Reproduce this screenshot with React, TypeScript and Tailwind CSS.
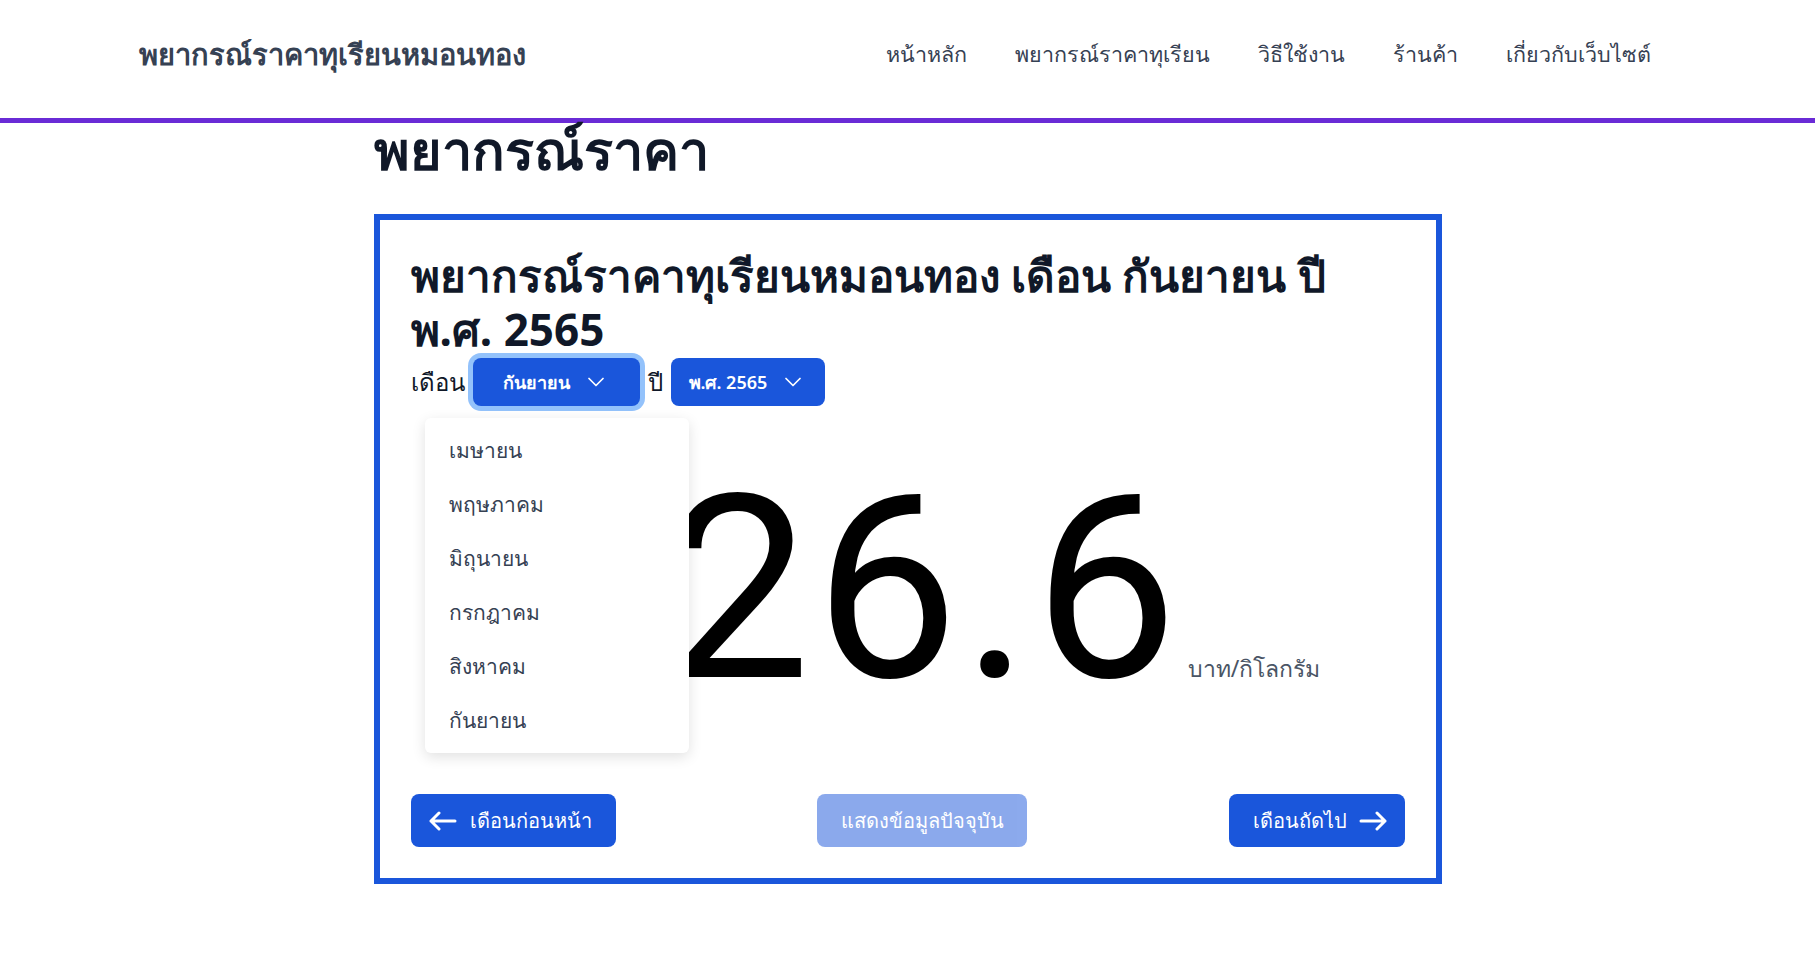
import { ChevronDown } from 'lucide-react'

const navLinks = ['หน้าหลัก', 'พยากรณ์ราคาทุเรียน', 'วิธีใช้งาน', 'ร้านค้า', 'เกี่ยวกับเว็บไซต์']
const months = ['เมษายน', 'พฤษภาคม', 'มิถุนายน', 'กรกฎาคม', 'สิงหาคม', 'กันยายน']

function LongArrow({ flip = false }: { flip?: boolean }) {
  return (
    <svg
      width="28"
      height="20"
      viewBox="0 0 28 20"
      fill="none"
      stroke="currentColor"
      strokeWidth="3"
      strokeLinecap="round"
      strokeLinejoin="round"
      className={flip ? 'rotate-180' : ''}
    >
      <path d="M26 10H2M10 2 2 10l8 8" />
    </svg>
  )
}

export default function App() {
  return (
    <main className="min-h-screen bg-white [font-family:'Noto_Sans',sans-serif] text-gray-900">
      {/* Navigation */}
      <nav className="h-[123px] border-b-[5px] border-[#6a2bd6] bg-white">
        <div className="flex h-full items-center justify-between pb-[10px] pl-[139px] pr-[140px]">
          <span className="text-[29px] font-semibold text-gray-700">พยากรณ์ราคาทุเรียนหมอนทอง</span>
          <div className="flex items-center">
            {navLinks.map((link) => (
              <span key={link} className="px-6 text-[21.5px] text-gray-700">
                {link}
              </span>
            ))}
          </div>
        </div>
      </nav>

      <section className="mx-auto w-[1068px]">
        <h1 className="mt-[-4px] text-[54px] font-bold leading-[60px] text-gray-900">พยากรณ์ราคา</h1>

        {/* Forecast card */}
        <div className="mt-[35px] border-[6px] border-[#1a56db] px-[31px] pt-[28px] pb-[31px]">
          <h2 className="text-[44px] font-bold leading-[54px] text-gray-900">
            พยากรณ์ราคาทุเรียนหมอนทอง เดือน กันยายน ปี พ.ศ.&nbsp;2565
          </h2>

          <div className="mt-[2px] flex items-center gap-2 text-2xl text-gray-900">
            <span>เดือน</span>
            <div className="relative">
              <button className="flex h-12 w-[167px] items-center justify-center gap-3 rounded-lg bg-[#1a56db] text-lg font-semibold text-white ring-[5px] ring-[#93c2fb]">
                กันยายน
                <ChevronDown className="h-7 w-7" strokeWidth={1.5} />
              </button>
              <div className="absolute top-[60px] left-[-48px] z-10 w-[264px] rounded-md bg-white pt-[5px] pb-[6px] shadow-[0_4px_14px_rgba(0,0,0,0.12)]">
                {months.map((m) => (
                  <div key={m} className="flex h-[54px] items-center px-6 text-[21px] font-medium text-gray-700">
                    {m}
                  </div>
                ))}
              </div>
            </div>
            <span>ปี</span>
            <button className="flex h-12 items-center gap-3 rounded-lg bg-[#1a56db] pr-[18px] pl-[18px] text-lg font-semibold text-white">
              พ.ศ. 2565
              <ChevronDown className="h-7 w-7" strokeWidth={1.5} />
            </button>
          </div>

          {/* Price */}
          <div className="mt-[56px] flex items-baseline justify-center gap-[6px] pl-[24px]">
            <span className="[font-family:Roboto,sans-serif] text-[256px] leading-none tracking-[4px] text-black">
              126.6
            </span>
            <span className="text-[23px] text-gray-600">บาท/กิโลกรัม</span>
          </div>

          {/* Actions */}
          <div className="mt-[76px] flex items-center justify-between">
            <button className="flex h-[53px] items-center gap-[13px] rounded-lg bg-[#1a56db] pr-6 pl-[18px] text-xl font-medium text-white">
              <LongArrow />
              เดือนก่อนหน้า
            </button>
            <button className="flex h-[53px] w-[210px] items-center justify-center rounded-lg bg-[#1a56db] text-xl font-medium text-white opacity-50">
              แสดงข้อมูลปัจจุบัน
            </button>
            <button className="flex h-[53px] items-center gap-3 rounded-lg bg-[#1a56db] pr-[18px] pl-6 text-xl font-medium text-white">
              เดือนถัดไป
              <LongArrow flip />
            </button>
          </div>
        </div>
      </section>
    </main>
  )
}
